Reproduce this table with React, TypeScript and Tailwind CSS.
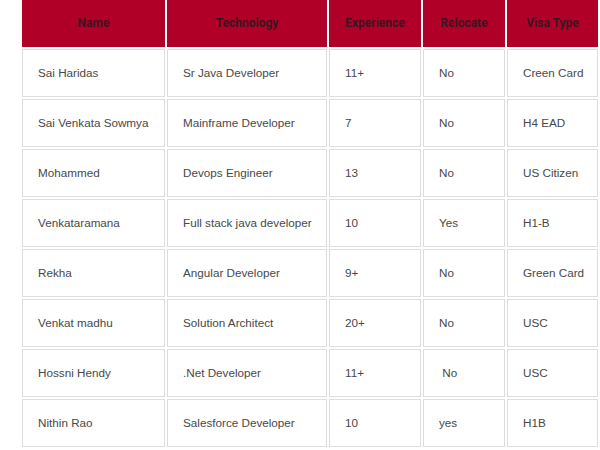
const rows = [
  ['Sai Haridas', 'Sr Java Developer', '11+', 'No', 'Creen Card'],
  ['Sai Venkata Sowmya', 'Mainframe Developer', '7', 'No', 'H4 EAD'],
  ['Mohammed', 'Devops Engineer', '13', 'No', 'US Citizen'],
  ['Venkataramana', 'Full stack java developer', '10', 'Yes', 'H1-B'],
  ['Rekha', 'Angular Developer', '9+', 'No', 'Green Card'],
  ['Venkat madhu', 'Solution Architect', '20+', 'No', 'USC'],
  ['Hossni Hendy', '.Net Developer', '11+', '\u00a0No', 'USC'],
  ['Nithin Rao', 'Salesforce Developer', '10', 'yes', 'H1B'],
]

const headers = ['Name', 'Technology', 'Experience', 'Relocate', 'Visa Type']

export default function App() {
  return (
    <div className="w-[600px] h-[450px] overflow-hidden bg-white">
      <table className="ml-[20px] -mt-[3px] table-fixed border-separate border-spacing-[2px] text-[12px]">
        <colgroup>
          <col className="w-[143px]" />
          <col className="w-[160px]" />
          <col className="w-[92px]" />
          <col className="w-[82px]" />
          <col className="w-[91px]" />
        </colgroup>
        <thead>
          <tr>
            {headers.map(h => (
              <th
                key={h}
                className="h-[48px] border border-[#b10027] bg-[#b10027] text-center font-['Roboto',sans-serif] font-bold text-[#3a1520]"
              >
                {h}
              </th>
            ))}
          </tr>
        </thead>
        <tbody>
          {rows.map(r => (
            <tr key={r[0]}>
              {r.map((c, i) => (
                <td
                  key={i}
                  className="h-[48px] border border-[#dedede] pl-[15px] text-left font-['Liberation_Sans',Arial,sans-serif] text-[11.7px] text-[#484848] whitespace-nowrap"
                >
                  {c}
                </td>
              ))}
            </tr>
          ))}
        </tbody>
      </table>
    </div>
  )
}
